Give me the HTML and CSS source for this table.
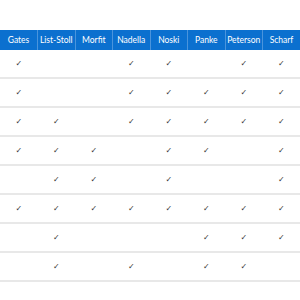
FILE: index.html
```html
<!DOCTYPE html>
<html>
<head>
<meta charset="utf-8">
<link rel="stylesheet" href="styles.css">
</head>
<body>
<table class="grid">
  <thead>
    <tr>
      <th>Gates</th><th>List-Stoll</th><th>Morfit</th><th>Nadella</th><th>Noski</th><th>Panke</th><th>Peterson</th><th>Scharf</th>
    </tr>
  </thead>
  <tbody>
    <tr><td>✓</td><td></td><td></td><td>✓</td><td>✓</td><td></td><td>✓</td><td>✓</td></tr>
    <tr><td>✓</td><td></td><td></td><td>✓</td><td>✓</td><td>✓</td><td>✓</td><td>✓</td></tr>
    <tr><td>✓</td><td>✓</td><td></td><td>✓</td><td>✓</td><td>✓</td><td>✓</td><td>✓</td></tr>
    <tr><td>✓</td><td>✓</td><td>✓</td><td></td><td>✓</td><td>✓</td><td></td><td>✓</td></tr>
    <tr><td></td><td>✓</td><td>✓</td><td></td><td>✓</td><td></td><td></td><td>✓</td></tr>
    <tr><td>✓</td><td>✓</td><td>✓</td><td>✓</td><td>✓</td><td>✓</td><td>✓</td><td>✓</td></tr>
    <tr><td></td><td>✓</td><td></td><td></td><td></td><td>✓</td><td>✓</td><td>✓</td></tr>
    <tr><td></td><td>✓</td><td></td><td>✓</td><td></td><td>✓</td><td>✓</td><td></td></tr>
  </tbody>
</table>
</body>
</html>
```

FILE: styles.css
```css
html, body {
  margin: 0;
  padding: 0;
  background: #ffffff;
}
body {
  padding-top: 30px;
  font-family: Lato, "Open Sans", sans-serif;
}
.grid {
  width: 300px;
  border-collapse: collapse;
  table-layout: fixed;
}
.grid th {
  height: 20px;
  padding: 0;
  background: #0b70cf;
  color: #ffffff;
  font-weight: 400;
  font-size: 8.5px;
  text-align: center;
  border-left: 1px solid #4a94dc;
}
.grid th:first-child {
  border-left: none;
}
.grid td {
  height: 27px;
  padding: 0;
  text-align: center;
  color: #333333;
  font-family: "DejaVu Sans", sans-serif;
  font-size: 8px;
  border-bottom: 2px solid #e8e8e8;
}
```
